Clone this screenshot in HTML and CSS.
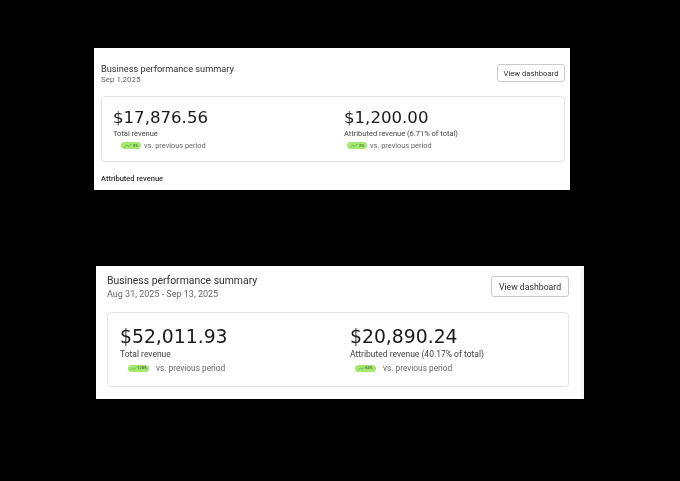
FILE: index.html
```html
<!DOCTYPE html>
<html lang="en">
<head>
  <meta charset="UTF-8" />
  <title>Business performance summary</title>
  <link rel="stylesheet" href="styles.css">
</head>
<body>

<!-- First summary -->
<section class="panel panel-small">
  <div class="head">
    <div>
      <h2>Business performance summary</h2>
      <p class="date">Sep 1,2025</p>
    </div>
    <button class="btn">View dashboard</button>
  </div>
  <div class="card">
    <div class="stat">
      <div class="amount">$17,876.56</div>
      <div class="label">Total revenue</div>
      <div class="delta delta-a">
        <span class="pill"><svg viewBox="0 0 10 6"><path d="M0.5 5L3.5 2.5L5.5 4L9.5 1"/></svg>5%</span>
        vs. previous period
      </div>
    </div>
    <div class="stat">
      <div class="amount">$1,200.00</div>
      <div class="label">Attributed revenue (6.71% of total)</div>
      <div class="delta delta-b">
        <span class="pill"><svg viewBox="0 0 10 6"><path d="M0.5 5L3.5 2.5L5.5 4L9.5 1"/></svg>2%</span>
        vs. previous period
      </div>
    </div>
  </div>
  <h3>Attributed revenue</h3>
</section>

<!-- Second summary -->
<section class="panel panel-large">
  <div class="head">
    <div>
      <h2>Business performance summary</h2>
      <p class="date">Aug 31, 2025 - Sep 13, 2025</p>
    </div>
    <button class="btn">View dashboard</button>
  </div>
  <div class="card">
    <div class="stat">
      <div class="amount">$52,011.93</div>
      <div class="label">Total revenue</div>
      <div class="delta delta-a">
        <span class="pill"><svg viewBox="0 0 10 6"><path d="M0.5 5L3.5 2.5L5.5 4L9.5 1"/></svg>128%</span>
        vs. previous period
      </div>
    </div>
    <div class="stat">
      <div class="amount">$20,890.24</div>
      <div class="label">Attributed revenue (40.17% of total)</div>
      <div class="delta delta-b">
        <span class="pill"><svg viewBox="0 0 10 6"><path d="M0.5 5L3.5 2.5L5.5 4L9.5 1"/></svg>84%</span>
        vs. previous period
      </div>
    </div>
  </div>
</section>

</body>
</html>
```

FILE: styles.css
```css
html, body {
  height: 100%;
}
body {
  margin: 0;
  background-color: #000;
  font-family: Roboto, "Open Sans", sans-serif;
  color: #303030;
  overflow: hidden;
}
h2, h3, p {
  margin: 0;
  font-weight: 400;
}
.panel {
  background-color: #fff;
  box-sizing: border-box;
  filter: blur(0.3px);
}
.head {
  display: flex;
  justify-content: space-between;
  align-items: flex-start;
}
.btn {
  background: #fff;
  border: 1px solid #c9c9c9;
  font-family: inherit;
  font-weight: 400;
  color: #303030;
  padding: 0;
}
.card {
  display: grid;
  background: #fff;
  border: 1px solid #e3e3e3;
  box-sizing: border-box;
}
.amount {
  font-family: "DejaVu Sans", sans-serif;
  color: #1a1a1a;
}
.label {
  color: #444;
}
.date, .delta {
  color: #666;
}
.delta {
  display: flex;
  align-items: center;
}
.pill {
  display: inline-flex;
  align-items: center;
  justify-content: center;
  background-color: #a4e86f;
  border-radius: 4px;
  color: #4c7a35;
  font-weight: 600;
}
.pill svg {
  fill: none;
  stroke: #4fa03a;
  stroke-width: 0.8;
}

/* upper screenshot */
.panel-small {
  width: 476px;
  height: 142px;
  margin: 48px 0 0 94px;
  padding: 15px 5px 0 7px;
}
.panel-small h2 {
  font-size: 9.2px;
  line-height: 12px;
}
.panel-small .date {
  font-size: 8px;
  line-height: 11px;
  margin-top: -1px;
}
.panel-small .btn {
  width: 68px;
  height: 18px;
  font-size: 7.7px;
  border-radius: 3px;
  margin-top: 1px;
}
.panel-small .card {
  height: 66px;
  margin-top: 11px;
  padding: 10px 11px 0;
  border-radius: 4px;
  grid-template-columns: 231px 1fr;
}
.panel-small .amount {
  font-size: 16.6px;
  line-height: 21px;
}
.panel-small .label {
  font-size: 7.5px;
  line-height: 10px;
  margin-top: 1px;
}
.panel-small .delta {
  font-size: 7.4px;
  line-height: 11px;
  margin-top: 1px;
}
.panel-small .delta-a { padding-left: 8px; }
.panel-small .delta-b { padding-left: 3px; }
.panel-small .pill {
  width: 20px;
  height: 7px;
  font-size: 4px;
  margin-right: 3px;
}
.panel-small .pill svg {
  width: 8px;
  height: 5px;
  margin-right: 1px;
}
.panel-small h3 {
  font-size: 7.5px;
  font-weight: 500;
  line-height: 11px;
  margin-top: 11px;
}

/* lower screenshot */
.panel-large {
  width: 488px;
  height: 133px;
  margin: 76px 0 0 96px;
  padding: 8px 12px 0 11px;
  border-right: 3px solid #f5f5f5;
}
.panel-large h2 {
  font-size: 10.4px;
  line-height: 13px;
}
.panel-large .date {
  font-size: 9px;
  line-height: 12px;
  margin-top: 1px;
}
.panel-large .btn {
  width: 78px;
  height: 21px;
  font-size: 8.7px;
  border-radius: 3px;
  margin-top: 2px;
}
.panel-large .card {
  height: 75px;
  margin-top: 12px;
  padding: 12px 12px 0;
  border-radius: 4px;
  grid-template-columns: 230px 1fr;
}
.panel-large .amount {
  font-size: 18.8px;
  line-height: 24px;
}
.panel-large .label {
  font-size: 8.5px;
  line-height: 11px;
}
.panel-large .delta {
  font-size: 8.3px;
  line-height: 12px;
  margin-top: 2px;
}
.panel-large .delta-a { padding-left: 8px; }
.panel-large .delta-b { padding-left: 5px; }
.panel-large .pill {
  width: 21px;
  height: 7px;
  font-size: 4px;
  margin-right: 7px;
}
.panel-large .pill svg {
  width: 7px;
  height: 5px;
}
```
